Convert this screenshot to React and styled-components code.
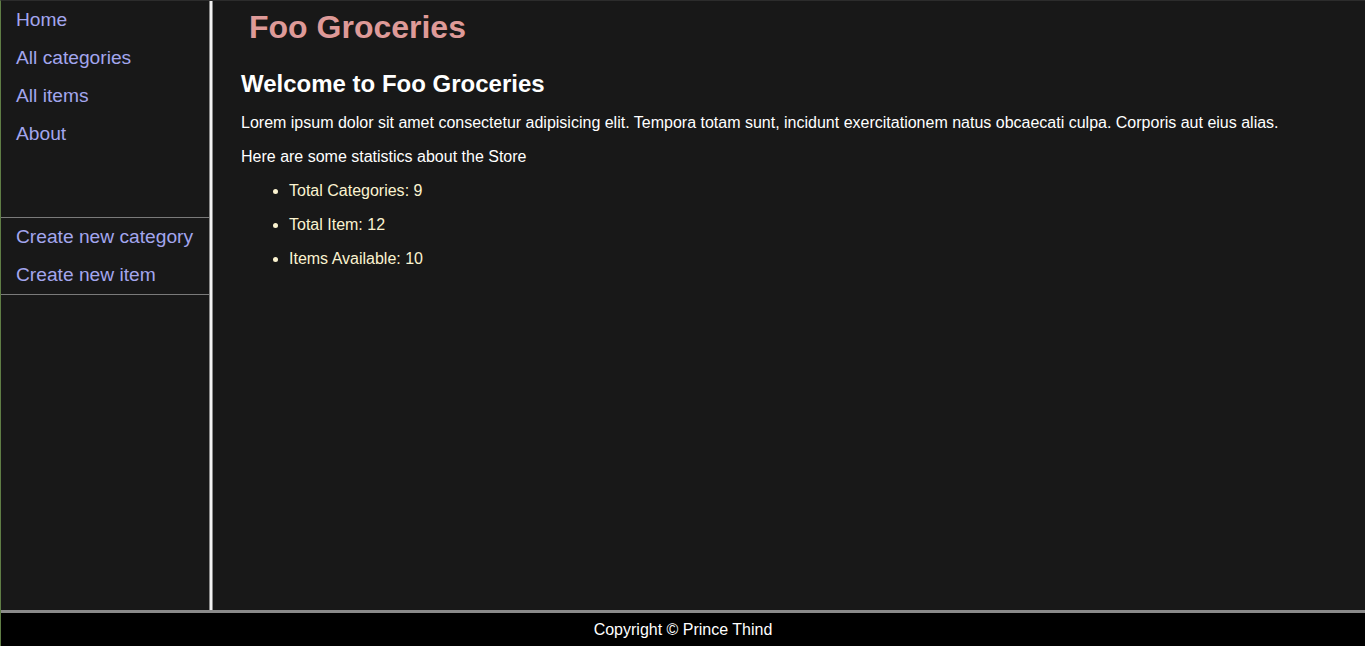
import styled, { createGlobalStyle } from "styled-components";

const GlobalStyle = createGlobalStyle`
  html, body {
    margin: 0;
    padding: 0;
    height: 100%;
  }
  body {
    background-color: #181818;
    font-family: "Liberation Sans", Arial, sans-serif;
    color: white;
  }
  #root {
    height: 100%;
  }
`;

const Page = styled.div`
  box-sizing: border-box;
  height: 100vh;
  display: flex;
  flex-direction: column;
  border-top: 1px solid #2c2c2c;
  border-left: 1px solid #5f7d45;
`;

const Body = styled.div`
  flex: 1;
  display: flex;
  min-height: 0;
`;

const Sidebar = styled.nav`
  width: 208px;
  display: flex;
  flex-direction: column;
`;

const NavGroup = styled.ul`
  list-style: none;
  margin: 0 0 ${(p) => p.$gap || 0}px;
  padding: 0;
  border-top: ${(p) => (p.$lined ? "1px solid #7a7a7a" : "none")};
  border-bottom: ${(p) => (p.$lined ? "1px solid #7a7a7a" : "none")};
`;

const NavLink = styled.a`
  display: block;
  padding: 8px 15px;
  line-height: 22px;
  font-size: 19.2px;
  color: #a3a6ee;
  text-decoration: none;
`;

const Divider = styled.div`
  width: 2px;
  background: #f2f2f2;
  border-left: 1px solid #8a8a8a;
  border-right: 1px solid #8a8a8a;
`;

const Main = styled.main`
  flex: 1;
  padding: 0 28px;
`;

const Title = styled.h1`
  margin: 8px 8px 0;
  font-size: 32px;
  font-weight: bold;
  color: #de9a98;
`;

const Heading = styled.h2`
  margin: 24px 0 0;
  font-size: 24px;
`;

const Text = styled.p`
  margin: 16px 0;
  font-size: 16px;
`;

const Stats = styled.ul`
  margin: 0;
  padding-left: 48px;
  color: #fbf3d0;
`;

const Stat = styled.li`
  margin: 16px 0;
  font-size: 16px;
`;

const Footer = styled.footer`
  border-top: 3px solid #8a8a8a;
  background: #000;
  height: 33px;
  display: flex;
  align-items: center;
  justify-content: center;
  font-size: 16px;
  color: #fff;
`;

const mainLinks = ["Home", "All categories", "All items", "About"];
const createLinks = ["Create new category", "Create new item"];

const stats = [
  ["Total Categories", 9],
  ["Total Item", 12],
  ["Items Available", 10],
];

export default function App() {
  return (
    <>
      <GlobalStyle />
      <Page>
        <Body>
          <Sidebar>
            <NavGroup $gap={64}>
              {mainLinks.map((l) => (
                <li key={l}>
                  <NavLink href="#">{l}</NavLink>
                </li>
              ))}
            </NavGroup>
            <NavGroup $lined>
              {createLinks.map((l) => (
                <li key={l}>
                  <NavLink href="#">{l}</NavLink>
                </li>
              ))}
            </NavGroup>
          </Sidebar>
          <Divider />
          <Main>
            <Title>Foo Groceries</Title>
            <Heading>Welcome to Foo Groceries</Heading>
            <Text>
              Lorem ipsum dolor sit amet consectetur adipisicing elit. Tempora totam sunt, incidunt
              exercitationem natus obcaecati culpa. Corporis aut eius alias.
            </Text>
            <Text>Here are some statistics about the Store</Text>
            <Stats>
              {stats.map(([label, n]) => (
                <Stat key={label}>
                  {label}: {n}
                </Stat>
              ))}
            </Stats>
          </Main>
        </Body>
        <Footer>Copyright © Prince Thind</Footer>
      </Page>
    </>
  );
}
